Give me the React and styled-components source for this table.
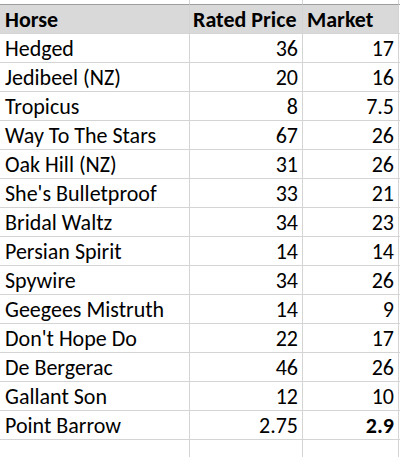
import React from "react";
import styled, { createGlobalStyle } from "styled-components";

const GlobalStyle = createGlobalStyle`
  html, body {
    margin: 0;
    padding: 0;
    background: #ffffff;
  }
  body {
    font-family: Calibri, Carlito, Lato, "Liberation Sans", sans-serif;
    color: #000000;
  }
`;

const rows = [
  ["Hedged", "36", "17"],
  ["Jedibeel (NZ)", "20", "16"],
  ["Tropicus", "8", "7.5"],
  ["Way To The Stars", "67", "26"],
  ["Oak Hill (NZ)", "31", "26"],
  ["She's Bulletproof", "33", "21"],
  ["Bridal Waltz", "34", "23"],
  ["Persian Spirit", "14", "14"],
  ["Spywire", "34", "26"],
  ["Geegees Mistruth", "14", "9"],
  ["Don't Hope Do", "22", "17"],
  ["De Bergerac", "46", "26"],
  ["Gallant Son", "12", "10"],
  ["Point Barrow", "2.75", "2.9"],
];

const Sheet = styled.div`
  display: grid;
  grid-template-columns: 190px 113px 96px 1px;
  width: 400px;
  height: 457px;
  overflow: hidden;
`;

const Cell = styled.div`
  box-sizing: border-box;
  height: ${(p) => p.$h}px;
  display: flex;
  align-items: flex-end;
  justify-content: ${(p) => (p.$num ? "flex-end" : "flex-start")};
  padding: 0 ${(p) => (p.$num ? "4px" : "0")} 2px ${(p) => (p.$num ? "0" : "5px")};
  border-right: 1px solid #d4d4d4;
  border-bottom: 1px solid ${(p) => (p.$dark ? "#9e9e9e" : "#d4d4d4")};
  background: ${(p) => (p.$head ? "#d9d9d9" : "transparent")};
  font-size: 22px;
  font-weight: ${(p) => (p.$bold ? 700 : 400)};
  white-space: nowrap;
  line-height: 1;
  overflow: hidden;
`;

const Edge = styled.div`
  height: ${(p) => p.$h}px;
  box-sizing: border-box;
  border-bottom: 1px solid ${(p) => (p.$dark ? "#9e9e9e" : "#d4d4d4")};
`;

function Row({ cells, h, head, dark, boldLast }) {
  return (
    <>
      {cells.map((c, i) => (
        <Cell
          key={i}
          $h={h}
          $head={head}
          $dark={dark}
          $num={!head && i > 0}
          $bold={head || (boldLast && i === 2)}
          style={head && i > 0 ? { paddingLeft: i === 1 ? "3px" : "4px" } : undefined}
        >
          {c}
        </Cell>
      ))}
      <Edge $h={h} $dark={dark} />
    </>
  );
}

export default function App() {
  return (
    <>
      <GlobalStyle />
      <Sheet>
        <Row cells={["", "", ""]} h={5} dark />
        <Row cells={["Horse", "Rated Price", "Market"]} h={29} head />
        {rows.map((r, i) => (
          <Row key={r[0]} cells={r} h={29} boldLast={i === rows.length - 1} />
        ))}
        <Row cells={["", "", ""]} h={29} />
      </Sheet>
    </>
  );
}
